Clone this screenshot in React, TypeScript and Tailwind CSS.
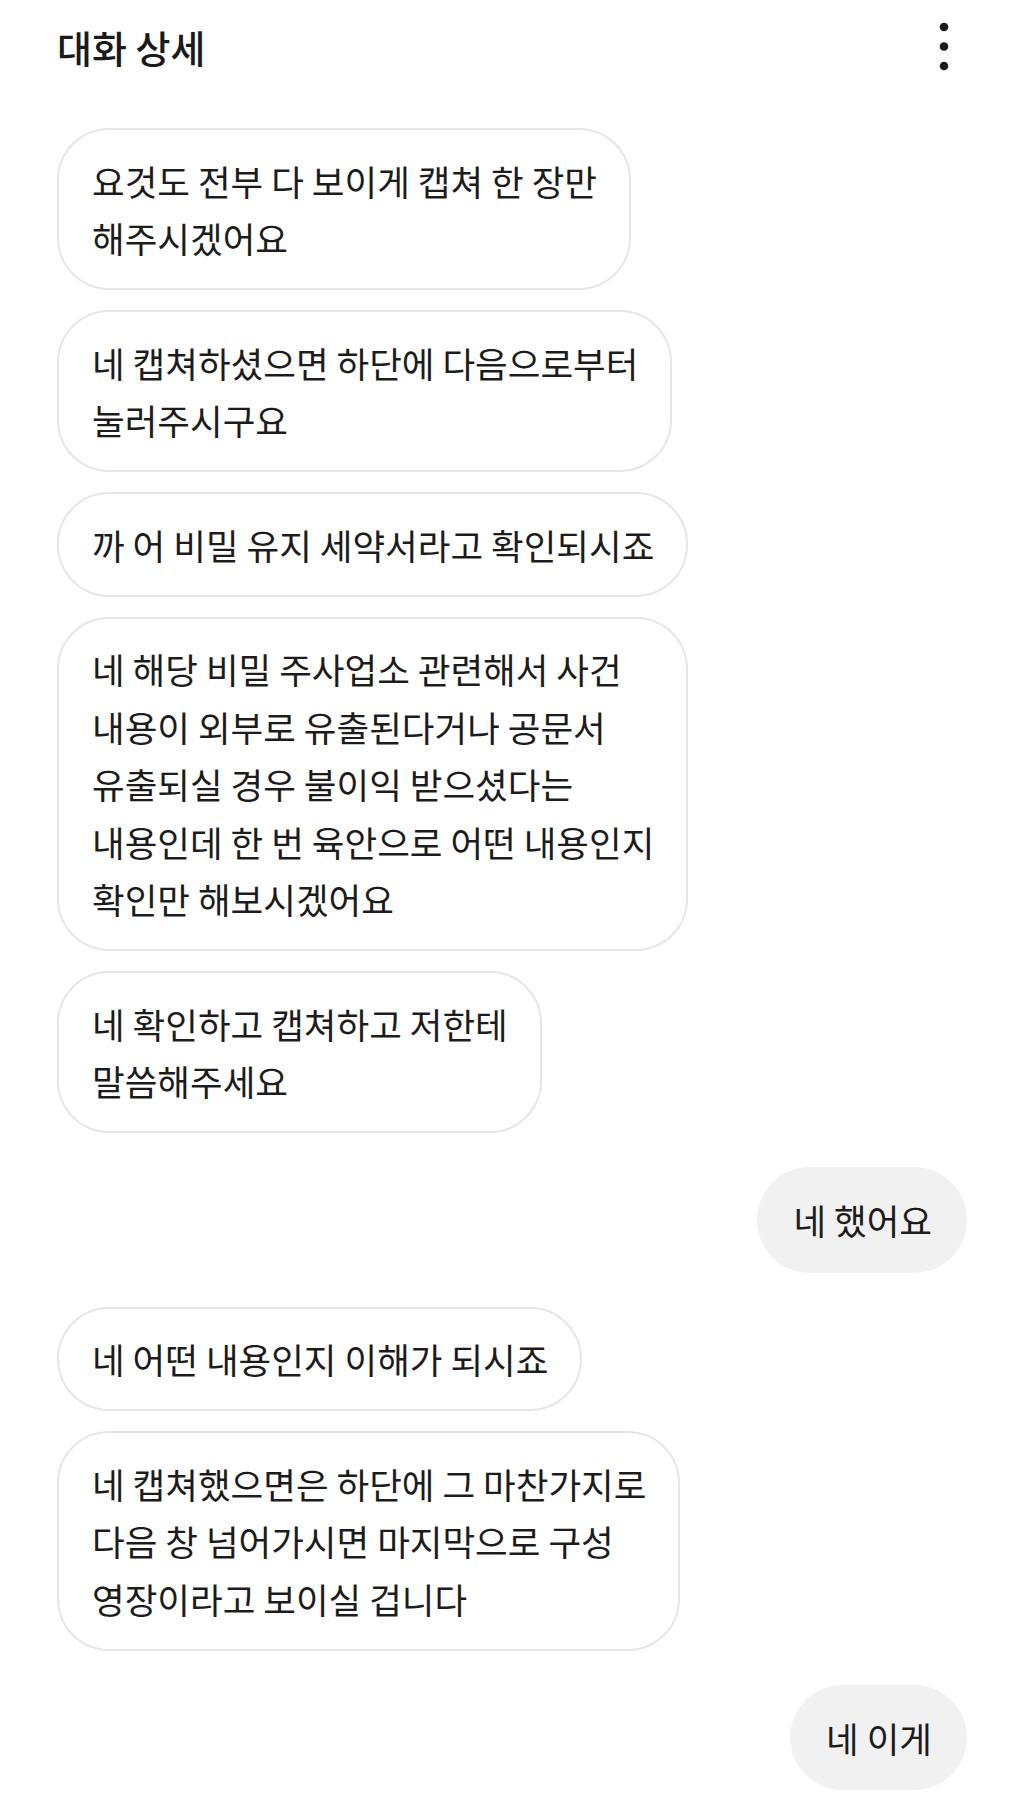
import React from "react";

type Msg = { side: "in" | "out"; lines: string[] };

const messages: Msg[] = [
  { side: "in", lines: ["요것도 전부 다 보이게 캡쳐 한 장만", "해주시겠어요"] },
  { side: "in", lines: ["네 캡쳐하셨으면 하단에 다음으로부터", "눌러주시구요"] },
  { side: "in", lines: ["까 어 비밀 유지 세약서라고 확인되시죠"] },
  {
    side: "in",
    lines: [
      "네 해당 비밀 주사업소 관련해서 사건",
      "내용이 외부로 유출된다거나 공문서",
      "유출되실 경우 불이익 받으셨다는",
      "내용인데 한 번 육안으로 어떤 내용인지",
      "확인만 해보시겠어요",
    ],
  },
  { side: "in", lines: ["네 확인하고 캡쳐하고 저한테", "말씀해주세요"] },
  { side: "out", lines: ["네 했어요"] },
  { side: "in", lines: ["네 어떤 내용인지 이해가 되시죠"] },
  {
    side: "in",
    lines: [
      "네 캡쳐했으면은 하단에 그 마찬가지로",
      "다음 창 넘어가시면 마지막으로 구성",
      "영장이라고 보이실 겁니다",
    ],
  },
  { side: "out", lines: ["네 이게"] },
];

function Bubble({ msg }: { msg: Msg }) {
  const incoming = msg.side === "in";
  return (
    <div className={incoming ? "flex justify-start" : "flex justify-end"}>
      <div
        className={
          incoming
            ? "rounded-[52px] border-2 border-[#e6e6e6] bg-white pl-[33px] pr-[32px] py-[21.5px]"
            : "rounded-[53px] bg-[#f1f1f1] pl-[36px] pr-[35px] py-[24px]"
        }
      >
        {msg.lines.map((l, i) => (
          <div key={i} className="whitespace-nowrap text-[35.5px] leading-[57.5px] text-[#1c1c1c]">
            {l}
          </div>
        ))}
      </div>
    </div>
  );
}

export default function App() {
  return (
    <div
      className="min-h-[1803px] w-[1024px] bg-white"
      style={{ fontFamily: '"Noto Sans CJK KR", "Noto Sans", sans-serif' }}
    >
      <header className="flex h-[94px] items-center justify-between pl-[57px] pr-[75px]">
        <h1 className="text-[38px] font-medium leading-none text-[#1a1a1a]">대화 상세</h1>
        <svg width="10" height="50" viewBox="0 0 10 50" aria-label="더보기">
          <circle cx="5" cy="5" r="4.3" fill="#1a1a1a" />
          <circle cx="5" cy="24.5" r="4.3" fill="#1a1a1a" />
          <circle cx="5" cy="44" r="4.3" fill="#1a1a1a" />
        </svg>
      </header>
      <main className="flex flex-col px-[57px] pt-[34px] pb-[13px]">
        {messages.map((m, i) => {
          const prev = messages[i - 1];
          const gap = !prev ? "" : prev.side === m.side ? "mt-[20px]" : "mt-[34px]";
          return (
            <div key={i} className={gap}>
              <Bubble msg={m} />
            </div>
          );
        })}
      </main>
    </div>
  );
}
